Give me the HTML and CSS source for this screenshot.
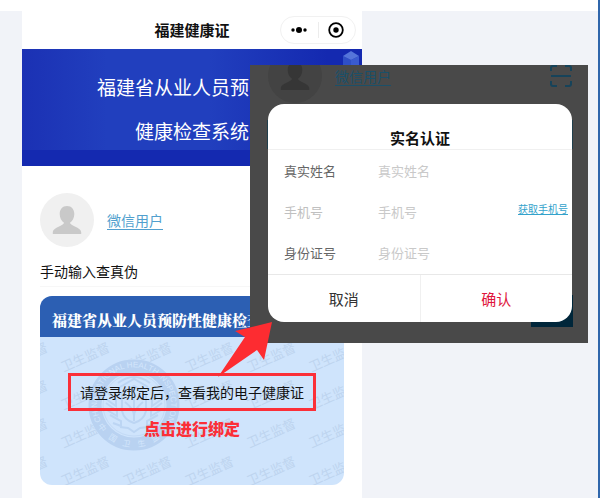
FILE: index.html
```html
<!DOCTYPE html>
<html lang="zh-CN">
<head>
    <meta charset="UTF-8">
    <meta name="viewport" content="width=device-width, initial-scale=1.0">
    <title>福建健康证</title>
    <link rel="stylesheet" href="styles.css">
</head>
<body>

<div class="page">
    <!-- Mini program screen -->
    <div class="phone">
        <header class="title-bar">
            <h1>福建健康证</h1>
            <div class="capsule">
                <button type="button" aria-label="更多">
                    <svg width="20" height="16" viewBox="0 0 20 16"><circle cx="4" cy="8" r="1.7"/><circle cx="10" cy="8" r="3"/><circle cx="16" cy="8" r="1.7"/></svg>
                </button>
                <button type="button" aria-label="关闭">
                    <svg width="18" height="18" viewBox="0 0 18 18"><circle cx="9" cy="9" r="6.8" fill="none" stroke="#000" stroke-width="1.8"/><circle cx="9" cy="9" r="2.7"/></svg>
                </button>
            </div>
        </header>

        <div class="banner">
            <p>福建省从业人员预防性</p>
            <p>健康检查系统</p>
            <svg class="cube" width="18" height="30" viewBox="0 0 18 30"><path d="M1 6v19l8 5V10z" fill="#2f4fc6"/><path d="M17 6v19l-8 5V10z" fill="#3a5bd0"/><path d="M9 1l8 5-8 4-8-4z" fill="#5575da"/></svg>
        </div>

        <main class="content">
            <div class="user">
                <svg class="avatar" width="54" height="54" viewBox="0 0 54 54"><circle cx="27" cy="27" r="27" fill="#f0f0f0"/><path d="M27 13c-4.600 0-7.300 3.400-7.300 8 0 3.900 1.800 7.300 4.300 8.800c0 3-10.800 4.500-11.200 9.200V41h28.400v-2c-.4-4.700-11.200-6.200-11.200-9.200 2.500-1.500 4.300-4.900 4.300-8.800 0-4.600-2.700-8-7.300-8z" fill="#c9c9c9"/></svg>
                <a href="#user">微信用户</a>
            </div>
            <button type="button" class="verify">手动输入查真伪</button>

            <section class="card">
                <h2>福建省从业人员预防性健康检查合格证</h2>
                <div class="card-body">
                    <div class="watermark" aria-hidden="true">
                        <span>卫生监督</span><span>卫生监督</span><span>卫生监督</span><span>卫生监督</span><span>卫生监督</span><span>卫生监督</span>
                        <span>卫生监督</span><span>卫生监督</span><span>卫生监督</span><span>卫生监督</span><span>卫生监督</span><span>卫生监督</span>
                        <span>卫生监督</span><span>卫生监督</span><span>卫生监督</span><span>卫生监督</span><span>卫生监督</span><span>卫生监督</span>
                        <span>卫生监督</span><span>卫生监督</span><span>卫生监督</span><span>卫生监督</span><span>卫生监督</span><span>卫生监督</span>
                    </div>
                    <svg class="emblem" width="92" height="92" viewBox="0 0 92 92" aria-hidden="true">
                        <defs>
                            <path id="arc-top" d="M14 64A37 37 0 1 1 78 64"/>
                            <path id="arc-bottom" d="M4 46A42 42 0 0 0 88 46"/>
                        </defs>
                        <circle cx="46" cy="46" r="46" fill="#cfe4fc"/>
                        <circle cx="46" cy="46" r="39" fill="none" stroke="#b9d2f1" stroke-width="13"/>
                        <circle cx="46" cy="46" r="31" fill="none" stroke="#c3daf6"/>
                        <g fill="none" stroke="#bcd5f3" stroke-width="2">
                            <path d="M20 34l8 7v6l-10-7M18 44l11 8v5l-10-6M22 56l11 6v5l-8-3M32 68l8 1 6 4 6-4 8-1"/>
                            <path d="M72 34l-8 7v6l10-7M74 44l-11 8v5l10-6M70 56l-11 6v5l8-3"/>
                            <path d="M32 28l14-8 14 8M34 34l12-7 12 7v18q-2 9-12 12-10-3-12-12zM46 30v32M37 43q9 7 9 14 0-7 9-14M30 24q16-12 32 0"/>
                        </g>
                        <text class="emblem-en"><textPath href="#arc-top" startOffset="50%" text-anchor="middle">CHINA NATIONAL HEALTH INSPECTION</textPath></text>
                        <text class="emblem-cn"><textPath href="#arc-bottom" startOffset="50%" text-anchor="middle">中　国　卫　生　监　督</textPath></text>
                    </svg>
                    <button type="button" class="bind">请登录绑定后，查看我的电子健康证</button>
                    <p class="hint">点击进行绑定</p>
                </div>
            </section>
        </main>
    </div>

    <!-- Second screen with the real name dialog -->
    <div class="overlay">
        <div class="dimmed-user">
            <svg width="54" height="54" viewBox="0 0 54 54"><circle cx="27" cy="27" r="27" fill="#434343"/><path d="M27 13c-4.600 0-7.300 3.400-7.300 8 0 3.900 1.800 7.300 4.300 8.800c0 3-10.800 4.500-11.200 9.200V41h28.400v-2c-.4-4.700-11.200-6.200-11.200-9.200 2.500-1.500 4.300-4.900 4.300-8.800 0-4.600-2.700-8-7.300-8z" fill="#363636"/></svg>
            <a href="#user">微信用户</a>
            <svg class="scan" width="22" height="22" viewBox="0 0 22 22" fill="none" stroke="#16435a" stroke-width="2"><path d="M1 6V3q0-2 2-2h4M15 1h4q2 0 2 2v3M1 16v3q0 2 2 2h4M15 21h4q2 0 2-2v-3M1 11h20"/></svg>
        </div>
        <div class="dimmed-banner"></div>
        <div class="dimmed-button"></div>

        <form class="dialog" role="dialog" aria-labelledby="dialog-title">
            <h2 id="dialog-title">实名认证</h2>
            <div class="fields">
                <div class="field">
                    <label for="name">真实姓名</label>
                    <input type="text" id="name" placeholder="真实姓名">
                </div>
                <div class="field">
                    <label for="phone" class="muted">手机号</label>
                    <input type="text" id="phone" placeholder="手机号">
                    <a href="#phone">获取手机号</a>
                </div>
                <div class="field">
                    <label for="id-number">身份证号</label>
                    <input type="text" id="id-number" placeholder="身份证号">
                </div>
            </div>
            <div class="actions">
                <button type="button">取消</button>
                <button type="button" class="confirm">确认</button>
            </div>
        </form>
    </div>

    <svg class="arrow" width="56" height="56" viewBox="0 0 56 56" aria-hidden="true"><path d="M55 1L18 10l10 6L1 56l39-27 7 10z" fill="#fd2c31"/></svg>
</div>

</body>
</html>
```
FILE: styles.css
```css
* {
    box-sizing: border-box;
}

body {
    font-family: "Noto Sans CJK SC", sans-serif;
    margin: 0;
    color: #111;
}

h1, h2, p {
    margin: 0;
}

button {
    font-family: inherit;
    color: inherit;
    background: none;
    border: none;
    padding: 0;
    cursor: pointer;
}

.page {
    position: relative;
    min-height: 100vh;
    padding: 11px 0 0 22px;
    background: linear-gradient(#fff, #fff) top / 100% 11px no-repeat #f1f3f8;
    border-right: 2px solid #2f66ab;
    overflow: hidden;
}

/* Phone screen */
.phone {
    width: 59%;
    min-height: calc(100vh - 11px);
    background-color: #fff;
}

.title-bar {
    display: grid;
    grid-template-columns: 1fr auto 1fr;
    align-items: center;
    height: 38px;
}

.title-bar h1 {
    grid-column: 2;
    font-size: 15px;
    line-height: 20px;
    font-weight: bold;
}

.capsule {
    justify-self: end;
    display: flex;
    width: 76px;
    height: 28px;
    margin-right: 6px;
    border: 1px solid #f1f1f1;
    border-radius: 14px;
}

.capsule button {
    flex: 1;
    display: flex;
    align-items: center;
    justify-content: center;
}

.capsule button + button {
    background: linear-gradient(#ececec, #ececec) left center / 1px 16px no-repeat;
}

.banner {
    position: relative;
    padding: 16px 0 13px;
    background: linear-gradient(90deg, #1b31b4, #213fbe 25%, #213fbe 55%, #1429b0 90%);
    border-bottom: 16px solid #1429b0;
    color: #fff;
    font-size: 19px;
    line-height: 44px;
    text-align: center;
    height: 117px;
}

.banner .cube {
    position: absolute;
    top: 1px;
    right: 2px;
}

.content {
    padding: 27px 18px 12px;
}

.user {
    display: flex;
    align-items: center;
    gap: 13px;
    font-size: 14px;
}

.user a {
    color: #519fce;
    text-underline-offset: 3px;
}

.verify {
    display: block;
    width: 100%;
    height: 40px;
    padding-top: 8px;
    border-bottom: 1px solid #f7f7f7;
    font-size: 14px;
    line-height: 20px;
    text-align: left;
}

/* Health certificate card */
.card {
    margin-top: 9px;
    border-radius: 12px;
    background-color: #cfe4fc;
    overflow: hidden;
}

.card h2 {
    height: 41px;
    padding: 8px 0 0 12px;
    background-color: #2c5fb3;
    color: #fff;
    font-family: "Noto Serif CJK SC", "Noto Sans CJK SC", serif;
    font-size: 15px;
    font-weight: 900;
    line-height: 32px;
    white-space: nowrap;
    overflow: hidden;
}

.card-body {
    position: relative;
    height: 148px;
    padding-top: 36px;
    text-align: center;
}

.watermark {
    position: absolute;
    top: 0;
    left: -48px;
    display: grid;
    grid-template-columns: repeat(6, 62px);
    grid-auto-rows: 38px;
    place-items: center;
    color: #bed4ef;
    font-size: 13px;
}

.watermark span {
    transform: rotate(-24deg);
    white-space: nowrap;
}

.emblem {
    position: absolute;
    top: 22px;
    left: 48px;
}

.emblem text {
    fill: #d3e6fc;
}

.emblem-en {
    font-family: "Liberation Sans", sans-serif;
    font-size: 8px;
}

.emblem-cn {
    font-size: 8px;
}

.bind {
    position: relative;
    height: 38px;
    padding: 0 9px;
    border: 3px solid #fb2f38;
    font-size: 14px;
    white-space: nowrap;
}

.hint {
    position: relative;
    margin-top: 5px;
    color: #fb2f38;
    font-size: 16px;
    font-weight: 900;
    line-height: 24px;
}

/* Dimmed screen behind the dialog */
.overlay {
    position: absolute;
    top: 65px;
    left: 250px;
    right: 10px;
    padding: 0 16px 21px 18px;
    background-color: #494949;
    overflow: hidden;
}

.dimmed-user {
    display: flex;
    align-items: center;
    gap: 13px;
    height: 22px;
    margin-bottom: 17px;
    font-size: 14px;
}

.dimmed-user a {
    color: #1b5069;
    text-underline-offset: 3px;
}

.dimmed-user .scan {
    margin-left: auto;
}

.dimmed-banner {
    position: absolute;
    top: 55px;
    left: 17px;
    right: 15px;
    height: 29px;
    background-color: #203f4d;
}

.dimmed-button {
    position: absolute;
    right: 15px;
    bottom: 16px;
    width: 42px;
    height: 32px;
    background-color: #00263a;
}

/* Dialog */
.dialog {
    position: relative;
    border-radius: 16px;
    background-color: #fff;
    overflow: hidden;
}

.dialog h2 {
    padding-top: 22px;
    border-bottom: 1px solid #f0f0f0;
    font-size: 15px;
    line-height: 23px;
    text-align: center;
}

.fields {
    padding-bottom: 1px;
}

.field {
    display: flex;
    align-items: center;
    height: 41px;
    padding: 0 4px 0 16px;
    font-size: 13px;
}

.field label {
    width: 94px;
    color: #666;
}

.field label.muted {
    color: #c0c0c0;
}

.field input {
    flex: 1;
    min-width: 0;
    padding: 0;
    border: none;
    outline: none;
    background: none;
    font: inherit;
}

.field input::placeholder {
    color: #c9c9c9;
}

.field a {
    padding-bottom: 6px;
    color: #33a2cb;
    font-size: 10px;
}

.actions {
    display: flex;
    border-top: 1px solid #e8e8e8;
}

.actions button {
    flex: 1;
    height: 47px;
    color: #333;
    font-size: 15px;
}

.actions button + button {
    border-left: 1px solid #f0f0f0;
}

.actions .confirm {
    color: #e0163c;
}

/* Arrow from the bind button to the dialog */
.arrow {
    position: absolute;
    top: 321px;
    left: 217px;
}
```
